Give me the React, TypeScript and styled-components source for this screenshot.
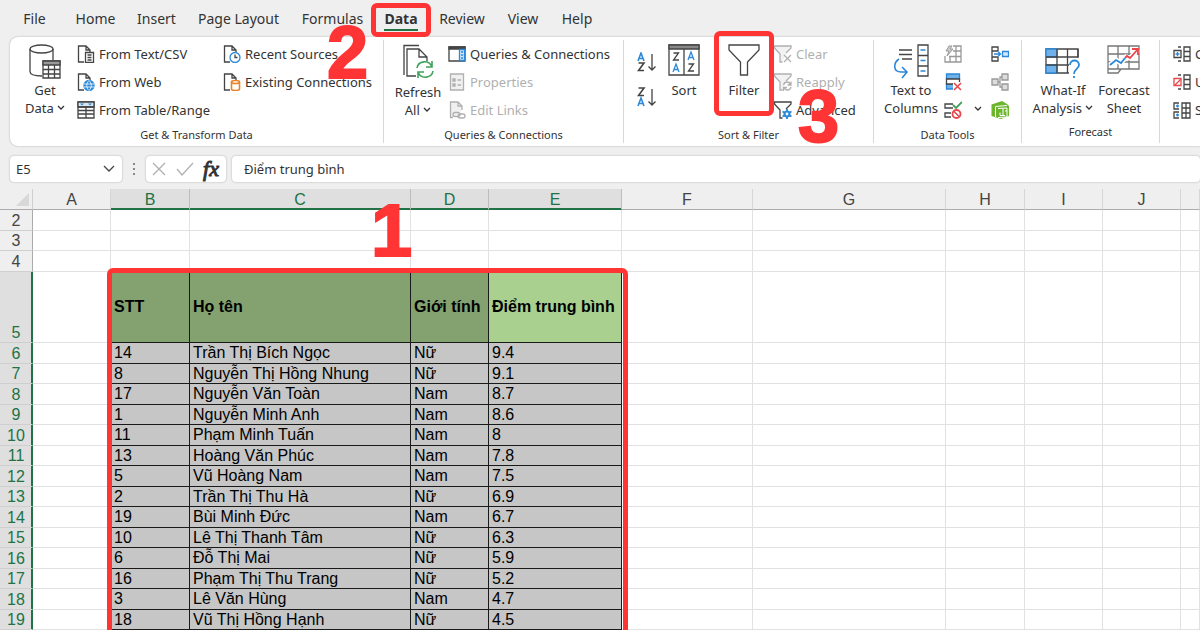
import React from "react";
import styled, { createGlobalStyle, css } from "styled-components";

const RED = "#fe3435";
const INK = "#444444";
const BLUE = "#2b88d8";
const MUTED = "#b0b0b0";
const GREEN = "#217346";

const GlobalStyle = createGlobalStyle`
  * { box-sizing: border-box; }
  body { margin: 0; background: #fff; font-family: "Noto Sans", "Open Sans", sans-serif; color: #333; }
  button, input { font: inherit; color: inherit; border: 0; background: none; padding: 0; margin: 0; }
  svg { display: block; flex: none; fill: none; stroke-width: 1.3; }
`;

const Page = styled.div`
  min-height: 100vh;
  background: #efefef;
  overflow: hidden;
  display: flex;
  flex-direction: column;
`;

const TabBar = styled.nav`
  display: flex;
  align-items: center;
  height: 37px;
  padding-left: 14px;
`;

const Tab = styled.button<{ $active?: boolean; $width: number }>`
  position: relative;
  flex: none;
  width: ${(p) => p.$width}px;
  height: 28px;
  font-size: 14px;
  line-height: 28px;
  white-space: nowrap;
  font-weight: ${(p) => (p.$active ? 700 : 400)};
`;

const TabText = styled.span<{ $active?: boolean }>`
  display: inline-block;
  height: 26px;
  border-bottom: 2px solid ${(p) => (p.$active ? GREEN : "transparent")};
`;

const Highlight = styled.span<{ $top: number; $side: number; $bottom: number }>`
  position: absolute;
  z-index: 2;
  top: ${(p) => p.$top}px;
  bottom: ${(p) => p.$bottom}px;
  left: ${(p) => p.$side}px;
  right: ${(p) => p.$side}px;
  border: 5px solid ${RED};
  border-radius: 6px;
  pointer-events: none;
`;

const Step = styled.span<{ $left: number; $top: number }>`
  position: absolute;
  z-index: 3;
  left: ${(p) => p.$left}px;
  top: ${(p) => p.$top}px;
  font: bold 74px/74px "Liberation Sans", Arial, sans-serif;
  color: ${RED};
  -webkit-text-stroke: 2px ${RED};
  pointer-events: none;
`;

const Ribbon = styled.section`
  display: flex;
  margin-left: 10px;
  height: 109px;
  padding: 3px 0;
  background: #fff;
  border-radius: 8px 0 0 8px;
  box-shadow: 0 0 2px rgba(0, 0, 0, 0.3);
`;

const Group = styled.div<{ $width?: number }>`
  position: relative;
  display: flex;
  flex-direction: column;
  flex: ${(p) => (p.$width ? "none" : "1 0 0")};
  width: ${(p) => (p.$width ? `${p.$width}px` : "auto")};
  border-right: 1px solid #d8d8d8;
`;

const GroupBody = styled.div<{ $left: number }>`
  display: flex;
  height: 86px;
  padding-left: ${(p) => p.$left}px;
`;

const Caption = styled.div`
  font-size: 11px;
  line-height: 22px;
  text-align: center;
`;

const BigButton = styled.button<{ $width: number }>`
  position: relative;
  flex: none;
  width: ${(p) => p.$width}px;
  height: 80px;
  padding-top: 4px;
  display: flex;
  flex-direction: column;
  align-items: center;
  font-size: 13px;
  line-height: 18px;
  white-space: nowrap;
`;

const BigText = styled.span`
  margin-top: 1px;
`;

const List = styled.div<{ $width?: number }>`
  flex: none;
  width: ${(p) => (p.$width ? `${p.$width}px` : "auto")};
`;

const SmallButton = styled.button<{ $muted?: boolean }>`
  display: flex;
  align-items: center;
  gap: 4px;
  height: 28px;
  font-size: 13px;
  line-height: 28px;
  white-space: nowrap;
  color: ${(p) => (p.$muted ? MUTED : "inherit")};
`;

const SortPair = styled.div`
  flex: none;
  width: 17px;
  padding-top: 12px;
  display: flex;
  flex-direction: column;
  gap: 15px;
`;

const FormulaBar = styled.div`
  display: flex;
  height: 26px;
  margin: 10px 0 7px 10px;
`;

const Field = styled.div<{ $width?: number }>`
  display: flex;
  align-items: center;
  flex: ${(p) => (p.$width ? "none" : "1")};
  width: ${(p) => (p.$width ? `${p.$width}px` : "auto")};
  background: #fff;
  border-radius: 4px;
  box-shadow: 0 0 2px rgba(0, 0, 0, 0.3);
`;

const FieldInput = styled.input<{ $pad: number }>`
  flex: 1;
  min-width: 0;
  height: 26px;
  padding-left: ${(p) => p.$pad}px;
  font-size: 13px;
`;

const IconButton = styled.button`
  display: flex;
  align-items: center;
  justify-content: center;
  width: 26px;
  height: 26px;
`;

const FxButton = styled(IconButton)`
  font: italic 22px/26px "Liberation Serif", serif;
  -webkit-text-stroke: 1px #333;
`;

const FormulaGap = styled.div`
  flex: none;
  width: 6px;
`;

const Grip = styled.div`
  flex: none;
  width: 24px;
  display: flex;
  align-items: center;
  justify-content: center;
`;

const SheetArea = styled.main`
  position: relative;
  flex: 1;
  background: #fff;
`;

const Sheet = styled.table`
  width: 100%;
  table-layout: fixed;
  border-collapse: separate;
  border-spacing: 0;
  font: 16px/18px "Liberation Sans", Arial, sans-serif;
  color: #000;
  tbody tr { height: 21px; }
  tbody tr:nth-child(even) { height: 20px; }
  tbody tr:nth-child(4) { height: 71px; }
`;

const ColHead = styled.th<{ $on?: boolean }>`
  height: 21px;
  padding: 2px 0 0;
  font-weight: 400;
  background: ${(p) => (p.$on ? "#dfdfdf" : "#efefef")};
  color: ${(p) => (p.$on ? GREEN : INK)};
  border-right: 1px solid ${(p) => (p.$on ? "#bdbdbd" : "#d6d6d6")};
  border-bottom: 1px solid ${(p) => (p.$on ? GREEN : "#ababab")};
  box-shadow: ${(p) => (p.$on ? `inset 0 -1px ${GREEN}` : "none")};
`;

const Corner = styled.th`
  height: 21px;
  padding: 0 3px 0 16px;
  background: #efefef;
  border-right: 1px solid #d0d0d0;
  border-bottom: 1px solid #ababab;
`;

const RowHead = styled.th<{ $on?: boolean }>`
  padding: 0;
  vertical-align: bottom;
  font-weight: 400;
  background: ${(p) => (p.$on ? "#dfdfdf" : "#efefef")};
  color: ${(p) => (p.$on ? GREEN : INK)};
  border-right: 1px solid ${(p) => (p.$on ? GREEN : "#ababab")};
  border-bottom: 1px solid #cfcfcf;
  box-shadow: ${(p) => (p.$on ? `inset -1px 0 ${GREEN}` : "none")};
`;

const Cell = styled.td<{ $kind?: "head" | "active" | "data" }>`
  padding: 0 0 0 3px;
  white-space: nowrap;
  border-right: 1px solid #e1e1e1;
  border-bottom: 1px solid #e1e1e1;
  ${(p) =>
    p.$kind &&
    css`
      background: ${p.$kind === "head" ? "#84a270" : p.$kind === "active" ? "#a9d08e" : "#c6c6c6"};
      font-weight: ${p.$kind === "data" ? 400 : 700};
      border-color: #1a1a1a;
    `}
`;

const Range = styled.div`
  position: absolute;
  left: 107px;
  top: 79px;
  bottom: -8px;
  width: 521px;
  border: 5px solid ${RED};
  border-radius: 6px;
  pointer-events: none;
`;

const ChevronMark = styled.svg`
  display: inline-block;
`;

const Chevron = () => (
  <ChevronMark width="8" height="8" viewBox="0 0 8 8" stroke="#333">
    <path d="M1 1l3 3 3-3" />
  </ChevronMark>
);

const Small: React.FC<{ children: React.ReactNode; stroke?: string }> = ({ children, stroke = INK }) => (
  <svg width="18" height="18" viewBox="0 0 18 18" stroke={stroke}>{children}</svg>
);

const PageShape = () => <path d="M7 17H1.500V1H9l4 4v2M9 1v4h4" />;

const TextFileIcon = () => (
  <Small><PageShape /><path d="M8.500 7.500h8v10h-8zM10.500 10h4M10.500 12.500h4M10.500 15h4" fill="#fff" /></Small>
);
const WebIcon = () => (
  <Small><PageShape /><circle cx="12" cy="12.500" r="5" fill={BLUE} stroke={BLUE} /><path stroke="#fff" strokeWidth="0.8" d="M7 11h10M7 14h10M12 7.500c-3 3-3 7 0 10M12 7.500c3 3 3 7 0 10" /></Small>
);
const TableIcon = () => (
  <Small><path d="M1 1h16v16H1z" fill="#fff" /><path d="M1 1h16v5H1z" fill="#d7e6f2" /><path d="M1 6h16M1 9.500h16M1 13h16M9 6v11" /><path d="M3 2.500l2 2 2-2zM11 2.500l2 2 2-2z" fill={BLUE} stroke="none" /></Small>
);
const RecentIcon = () => (
  <Small><PageShape /><circle cx="12" cy="12.500" r="5" fill="#fff" stroke={BLUE} /><path d="M12 9.500v3h2.500" /></Small>
);
const ConnectionIcon = () => (
  <Small><PageShape /><path stroke="#e8832a" strokeWidth="1.600" fill="#fff" d="M8.500 9v7c0 2 8 2 8 0V9" /><ellipse cx="12.500" cy="9" rx="4" ry="1.500" stroke="#e8832a" strokeWidth="1.600" fill="#fff" /></Small>
);
const QueriesIcon = () => (
  <Small><path d="M1 2h16v14H1z" /><path d="M1 2h16v2H1z" fill={INK} /><path d="M11.500 4.500h5v11h-5z" stroke={BLUE} fill="#d6e9f8" /><path d="M13 7h2M13 10h2M13 13h2" stroke={BLUE} /></Small>
);
const PropertiesIcon = () => (
  <Small stroke={MUTED}><path d="M2.500 1h13v16h-13z" fill="#f0f0f0" /><path d="M5 6h2v2H5zM5 11h2v2H5zM9.500 7h3.500M9.500 12h3.500" fill={MUTED} /></Small>
);
const LinksIcon = () => (
  <Small stroke={MUTED}><path d="M5 16.500H2.500V1H10l4 4v4M10 1v4h4" fill="#f0f0f0" /><rect x="5" y="11.500" width="7" height="4" rx="2" /><rect x="10" y="13" width="7" height="4" rx="2" /></Small>
);
const Funnel: React.FC<{ muted?: boolean; children: React.ReactNode }> = ({ muted, children }) => (
  <Small stroke={muted ? MUTED : INK}>
    <path d="M8.500 17H6V9L0.500 3V1H17v2l-5 5" fill={muted ? "#f2f2f2" : "#fff"} />
    {children}
  </Small>
);

const DatabaseIcon = () => (
  <svg width="32" height="36" viewBox="0 0 32 36" stroke={INK}>
    <path d="M1 5v22.500c0 3 5 4.500 12 4.500M24 5v11" />
    <ellipse cx="12.500" cy="5" rx="11.500" ry="4" />
    <path d="M14 17h17v17H14z" fill="#fff" /><path d="M14 17h17v4H14z" fill="#999" />
    <path d="M14 25.500h17M14 30h17M19.500 21v13M25.500 21v13" />
  </svg>
);
const RefreshIcon = () => (
  <svg width="32" height="38" viewBox="0 0 32 38" stroke={INK}>
    <path d="M2 31V1.500h15" /><path d="M14 32H5V5h12l8 8v4M17 5v8h8" />
    <g stroke="#3fa35b" strokeWidth="1.600"><path d="M15 24c1-7 12-9 15-1M30 17v6h-6M31 27c-1 7-12 9-15 1M16 34v-6h6" /></g>
  </svg>
);
const SortIcon = () => (
  <svg width="32" height="36" viewBox="0 0 32 36" stroke={INK}>
    <path d="M1 1h30v30H1zM16 5v26" /><path d="M1 1h30v4H1z" fill="#888" />
    <path d="M5.500 9h5l-5 7h5.500M20.500 20h5l-5 7h5.500" />
    <path stroke={BLUE} d="M5 28l3-8 3 8M6 25.500h4M20 16l3-8 3 8M21 13.500h4" />
  </svg>
);
const FilterIcon = () => (
  <svg width="32" height="36" viewBox="0 0 32 36" stroke={INK}>
    <path d="M1 1h30v5L19.500 18v13h-7V18L1 6z" />
  </svg>
);
const SortArrow: React.FC<{ down?: boolean }> = ({ down }) => (
  <svg width="20" height="20" viewBox="0 0 20 20" stroke={INK}>
    <g transform={down ? "translate(0 10)" : undefined} stroke={BLUE} strokeWidth="1.600"><path d="M1 9l3-8 3 8M2 6.500h4" /></g>
    <g transform={down ? undefined : "translate(0 10)"} strokeWidth="1.600"><path d="M1.500 1H7L1.500 8.500H7" /></g>
    <path d="M15 2v16M11.500 14.500L15 18l3.500-3.500" />
  </svg>
);
const ColumnsIcon = () => (
  <svg width="36" height="36" viewBox="0 0 36 36" stroke={INK}>
    <path d="M6 6h13M6 10.500h13M9 15h10M25 1h10v31H25zM25 11.500h10M25 22h10" />
    <path stroke={BLUE} strokeWidth="1.600" d="M6 15c-6 4-6 13 2 13h6M9 23l5 5-5 6M27.500 6h5M27.500 16.500h5M27.500 27h5" />
  </svg>
);
const WhatIfIcon = () => (
  <svg width="36" height="36" viewBox="0 0 36 36" stroke={INK}>
    <path d="M1 5h32v24H1z" fill="#fff" /><path d="M1 5h11v8H1zM1 21h11v8H1z" fill="#6fb1e8" stroke={BLUE} />
    <path d="M1 13h32M1 21h24M12 5v24M22.500 5v24M33 5v8" />
    <path d="M24 14h12v20H24z" fill="#fff" stroke="none" />
    <path stroke={BLUE} strokeWidth="1.800" d="M25 21c0-6 9-6 9 0 0 4-5 4-5 9M29 32v2" />
  </svg>
);
const ForecastIcon = () => (
  <svg width="34" height="36" viewBox="0 0 34 36" stroke="#777">
    <path d="M1 2h31v23H14l-3 4H1zM1 10h31M1 18h31M11 2v23M22 2v23M1 25h13" />
    <path stroke="#fff" strokeWidth="5" d="M3 21l6-5 5 3 5-6 4 1 8-8" />
    <path stroke={BLUE} strokeWidth="1.800" d="M3 21l6-5 5 3 4-5" />
    <path stroke="#e8484b" strokeWidth="1.800" d="M18 14l2-2 3 2 8-9M25 5h6v6" />
  </svg>
);

const FlashFillIcon = () => (
  <Small stroke="#999"><path d="M9 1h8v16H1v-6M5 11.500h12M9 6h8M6 11v6M12 1v16" /><path d="M5 1L2 6h3l-2 5 6-7H6l2-3z" fill="#ccc" strokeWidth="1" /></Small>
);
const DuplicatesIcon = () => (
  <Small stroke={BLUE}><path d="M2.500 1h13v5h-13zM2.500 11h9v5h-9z" fill="#6fb1e8" /><path d="M2.500 6h13v5h-13z" fill="#fff" stroke={INK} /><path d="M9 9h9v9H9z" fill="#fff" stroke="none" /><path stroke="#e8484b" strokeWidth="1.600" d="M10 10l7 7M17 10l-7 7" /></Small>
);
const ValidationIcon = () => (
  <Small><path d="M9 3H1v4h8M7 12H1v4h6" /><path stroke="#3fa35b" strokeWidth="1.800" d="M9 4l3 3 6-6" /><circle cx="12.500" cy="13" r="4" stroke="#e8484b" strokeWidth="1.800" /><path stroke="#e8484b" strokeWidth="1.600" d="M10 10.500l5 5" /></Small>
);
const ConsolidateIcon = () => (
  <Small><path d="M7 6V2H1v4h6M7 12v4H1v-4h6M1 6v6" /><path stroke={BLUE} d="M3 9h6M7 6.500L9.500 9 7 11.500M11.500 6.500h6v5h-6z" fill="#d6e9f8" /></Small>
);
const RelationsIcon = () => (
  <Small stroke="#999"><path d="M1 6h6v6H1zM11 1h6v6h-6zM11 11h6v6h-6z" fill="#ddd" /><path d="M7 9h2M11 4H9v10h2" /></Small>
);
const ModelIcon = () => (
  <Small stroke="#fff"><path d="M0.500 3.500L11 0l5 3 2 2v10l-8 3-9.500-3z" fill="#6cb52d" stroke="none" /><path d="M4.500 16V5.500L16 4.500M7 7.500l9-0.500v9l-9 0.500M12 7.500v7M9 11.500v3h5M14 10h2" strokeWidth="1" /></Small>
);
const OutlineIcon: React.FC<{ kind: "group" | "ungroup" | "subtotal" }> = ({ kind }) => (
  <Small>
    {kind === "subtotal" ? (
      <><path d="M9 2h8v15H9zM9 7h8M9 12h8M13 2v15M6 2H1v6h5M6 11H1v6h5" /><path stroke={BLUE} d="M3 5h3M4.500 3.500v3M3 14h3M4.500 12.500v3" /></>
    ) : (
      <><path d="M11 2h6v14h-6zM11 6.500h6M11 11.500h6M8 2H5M8 16H5" />
        <path d="M1 5.500h7v7H1z" stroke={kind === "group" ? INK : "#e8484b"} fill="#fff" />
        <path d={kind === "group" ? "M2.500 9h4M4.500 7v4" : "M2 12l6-6"} stroke={kind === "group" ? BLUE : "#e8484b"} /></>
    )}
  </Small>
);

const TABS: [string, number][] = [
  ["File", 41], ["Home", 81], ["Insert", 41], ["Page Layout", 123], ["Formulas", 65],
  ["Data", 72], ["Review", 50], ["View", 72], ["Help", 36],
];

const COLUMNS: [string, number | null][] = [
  ["A", 78], ["B", 79], ["C", 221], ["D", 78], ["E", 133], ["F", 131],
  ["G", 193], ["H", 79], ["I", 78], ["J", 78], ["", null],
];

const PEOPLE = [
  ["14", "Trần Thị Bích Ngọc", "Nữ", "9.4"],
  ["8", "Nguyễn Thị Hồng Nhung", "Nữ", "9.1"],
  ["17", "Nguyễn Văn Toàn", "Nam", "8.7"],
  ["1", "Nguyễn Minh Anh", "Nam", "8.6"],
  ["11", "Phạm Minh Tuấn", "Nam", "8"],
  ["13", "Hoàng Văn Phúc", "Nam", "7.8"],
  ["5", "Vũ Hoàng Nam", "Nam", "7.5"],
  ["2", "Trần Thị Thu Hà", "Nữ", "6.9"],
  ["19", "Bùi Minh Đức", "Nam", "6.7"],
  ["10", "Lê Thị Thanh Tâm", "Nữ", "6.3"],
  ["6", "Đỗ Thị Mai", "Nữ", "5.9"],
  ["16", "Phạm Thị Thu Trang", "Nữ", "5.2"],
  ["3", "Lê Văn Hùng", "Nam", "4.7"],
  ["18", "Vũ Thị Hồng Hạnh", "Nữ", "4.5"],
];

const ROWS: string[][] = [[], [], [], ["STT", "Họ tên", "Giới tính", "Điểm trung bình"], ...PEOPLE];

export default function App() {
  return (
    <Page>
      <GlobalStyle />
      <TabBar>
        {TABS.map(([name, width]) => (
          <Tab key={name} $width={width} $active={name === "Data"}>
            <TabText $active={name === "Data"}>{name}</TabText>
            {name === "Data" && <Highlight $top={-2} $bottom={-4} $side={6} />}
          </Tab>
        ))}
      </TabBar>

      <Ribbon>
        <Group $width={374}>
          <GroupBody $left={3}>
            <BigButton $width={64}><DatabaseIcon /><BigText>Get<br />Data <Chevron /></BigText></BigButton>
            <List $width={146}>
              <SmallButton><TextFileIcon />From Text/CSV</SmallButton>
              <SmallButton><WebIcon />From Web</SmallButton>
              <SmallButton><TableIcon />From Table/Range</SmallButton>
            </List>
            <List>
              <SmallButton><RecentIcon />Recent Sources</SmallButton>
              <SmallButton><ConnectionIcon />Existing Connections</SmallButton>
            </List>
          </GroupBody>
          <Caption>Get &amp; Transform Data</Caption>
          <Step $left={317} $top={-24}>2</Step>
        </Group>

        <Group $width={240}>
          <GroupBody $left={4}>
            <BigButton $width={60}><RefreshIcon /><BigText>Refresh<br />All <Chevron /></BigText></BigButton>
            <List>
              <SmallButton><QueriesIcon />Queries &amp; Connections</SmallButton>
              <SmallButton $muted disabled><PropertiesIcon />Properties</SmallButton>
              <SmallButton $muted disabled><LinksIcon />Edit Links</SmallButton>
            </List>
          </GroupBody>
          <Caption>Queries &amp; Connections</Caption>
        </Group>

        <Group $width={250}>
          <GroupBody $left={13}>
            <SortPair>
              <button aria-label="Sort A to Z"><SortArrow /></button>
              <button aria-label="Sort Z to A"><SortArrow down /></button>
            </SortPair>
            <BigButton $width={60}><SortIcon /><BigText>Sort</BigText></BigButton>
            <BigButton $width={60}><FilterIcon /><BigText>Filter</BigText><Highlight $top={-9} $bottom={4} $side={0} /></BigButton>
            <List>
              <SmallButton $muted disabled><Funnel muted><path d="M10 10l7 7M17 10l-7 7" /></Funnel>Clear</SmallButton>
              <SmallButton $muted disabled><Funnel muted><path d="M9.500 12c1-4 6-4 7 0M17 8.500V12h-3.500M17 14c-1 4-6 4-7 0M9.500 18v-3.500H13" /></Funnel>Reapply</SmallButton>
              <SmallButton><Funnel><circle cx="13" cy="13" r="2.500" stroke={BLUE} strokeWidth="2.200" /><path stroke={BLUE} strokeWidth="1.800" d="M13 8v2M13 16v2M8.500 10.500l2 1M15.500 14.500l2 1M8.500 15.500l2-1M15.500 11.500l2-1" /></Funnel>Advanced</SmallButton>
            </List>
          </GroupBody>
          <Caption>Sort &amp; Filter</Caption>
          <Step $left={174} $top={40}>3</Step>
        </Group>

        <Group $width={148}>
          <GroupBody $left={4}>
            <BigButton $width={66}><ColumnsIcon /><BigText>Text to<br />Columns</BigText></BigButton>
            <List $width={47}>
              <SmallButton aria-label="Flash Fill"><FlashFillIcon /></SmallButton>
              <SmallButton aria-label="Remove Duplicates"><DuplicatesIcon /></SmallButton>
              <SmallButton aria-label="Data Validation"><ValidationIcon /><Grip as="span"><Chevron /></Grip></SmallButton>
            </List>
            <List>
              <SmallButton aria-label="Consolidate"><ConsolidateIcon /></SmallButton>
              <SmallButton aria-label="Relationships"><RelationsIcon /></SmallButton>
              <SmallButton aria-label="Manage Data Model"><ModelIcon /></SmallButton>
            </List>
          </GroupBody>
          <Caption>Data Tools</Caption>
        </Group>

        <Group $width={138}>
          <GroupBody $left={10}>
            <BigButton $width={62}><WhatIfIcon /><BigText>What-If<br />Analysis <Chevron /></BigText></BigButton>
            <BigButton $width={60}><ForecastIcon /><BigText>Forecast<br />Sheet</BigText></BigButton>
          </GroupBody>
          <Caption>Forecast</Caption>
        </Group>

        <Group>
          <GroupBody $left={13}>
            <List>
              <SmallButton><OutlineIcon kind="group" />Group</SmallButton>
              <SmallButton><OutlineIcon kind="ungroup" />Ungroup</SmallButton>
              <SmallButton><OutlineIcon kind="subtotal" />Subtotal</SmallButton>
            </List>
          </GroupBody>
        </Group>
      </Ribbon>

      <FormulaBar>
        <Field $width={112}>
          <FieldInput $pad={6} aria-label="Name box" defaultValue="E5" />
          <IconButton aria-label="Open names">
            <svg width="12" height="8" viewBox="0 0 12 8" stroke={INK}><path d="M1 1l5 5 5-5" /></svg>
          </IconButton>
        </Field>
        <Grip><svg width="4" height="14" viewBox="0 0 4 14"><path fill="#888" d="M1 1h2v2H1zM1 6h2v2H1zM1 11h2v2H1z" /></svg></Grip>
        <Field $width={80}>
          <IconButton aria-label="Cancel"><svg width="14" height="14" viewBox="0 0 14 14" stroke={MUTED}><path d="M1 1l12 12M13 1L1 13" /></svg></IconButton>
          <IconButton aria-label="Enter"><svg width="18" height="14" viewBox="0 0 18 14" stroke={MUTED}><path d="M1 7l5 6L17 1" /></svg></IconButton>
          <FxButton aria-label="Insert function">fx</FxButton>
        </Field>
        <FormulaGap />
        <Field><FieldInput $pad={12} aria-label="Formula" defaultValue="Điểm trung bình" /></Field>
      </FormulaBar>

      <SheetArea>
        <Sheet>
          <colgroup>
            <col width={33} />
            {COLUMNS.map(([name, width]) => <col key={name} width={width ?? undefined} />)}
          </colgroup>
          <thead>
            <tr>
              <Corner aria-label="Select all"><svg width="13" height="13" viewBox="0 0 13 13"><path d="M13 0v13H0z" fill="#d8d8d8" /></svg></Corner>
              {COLUMNS.map(([name]) => <ColHead key={name} $on={name !== "" && "BCDE".includes(name)}>{name}</ColHead>)}
            </tr>
          </thead>
          <tbody>
            {ROWS.map((values, r) => (
              <tr key={r}>
                <RowHead $on={r > 2}>{r + 2}</RowHead>
                {COLUMNS.map(([name], c) => {
                  const value = values[c - 1];
                  const kind = value === undefined ? undefined : r > 3 ? "data" : c === 4 ? "active" : "head";
                  return <Cell key={name} $kind={kind}>{value}</Cell>;
                })}
              </tr>
            ))}
          </tbody>
        </Sheet>
        <Range />
        <Step $left={371} $top={5}>1</Step>
      </SheetArea>
    </Page>
  );
}
